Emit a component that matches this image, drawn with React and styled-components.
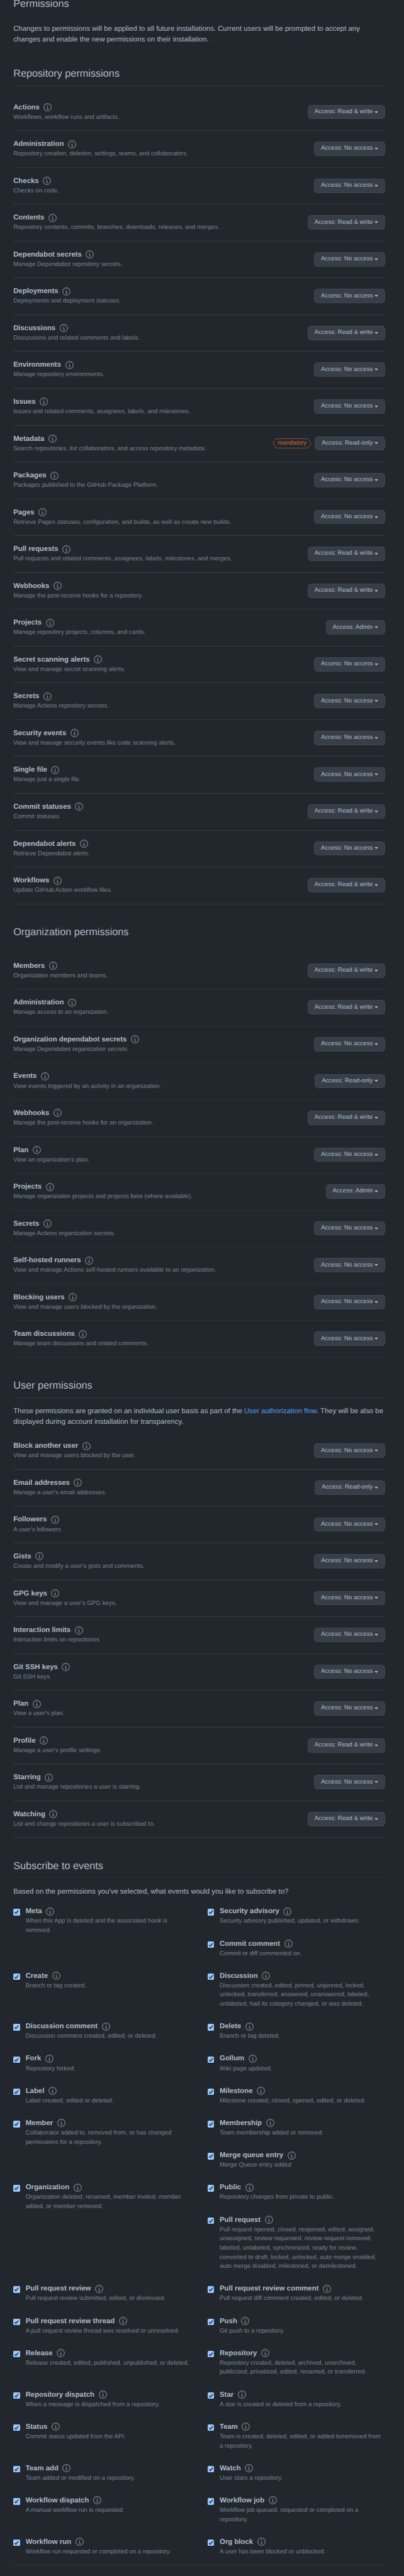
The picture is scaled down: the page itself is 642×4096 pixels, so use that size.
import React from "react";
import styled, { createGlobalStyle } from "styled-components";

// 1rem is ten design pixels.
const GlobalStyle = createGlobalStyle`
  html { font-size: 8.132px; background: #22272e; }
  body { margin: 0; }
  *, *::before, *::after { box-sizing: border-box; }
`;

const Page = styled.main`
  display: flow-root;
  height: 503.7rem;
  overflow: hidden;
  padding: 0 3.7rem 0 2.6rem;
  background: #22272e;
  color: #adbac7;
  font: 1.4rem/2.1rem "Liberation Sans", Arial, sans-serif;
  text-rendering: geometricPrecision;
`;

const Section = styled.section`
  margin-top: ${(p) => (p.$first ? "-0.8rem" : "4rem")};
`;

const Heading = styled.h2`
  height: 3.9rem;
  margin: 0 0 1.6rem;
  font-size: 2rem;
  font-weight: 400;
  line-height: 3rem;
  border-bottom: 1px solid ${(p) => (p.$faint ? "#292e36" : "#2e343c")};
`;

const Paragraph = styled.p`
  margin: 0;
  margin-bottom: ${(p) => p.$gap || "0"};
  white-space: pre;
`;

const Link = styled.a`
  color: #539bf5;
  text-decoration: none;
`;

const Row = styled.div`
  display: flex;
  justify-content: space-between;
  height: 7.2rem;
  padding-top: 1.6rem;
  border-bottom: 1px solid ${(p) => (p.$faint ? "#2d323a" : "#343a43")};
`;

const Title = styled.div`
  display: flex;
  gap: 0.8rem;
  height: 2.1rem;
  font-weight: 700;
  white-space: nowrap;
`;

const Note = styled.div`
  color: #768390;
  font-size: 1.2rem;
  line-height: 1.8rem;
  white-space: pre;
`;

const Controls = styled.div`
  display: flex;
  align-items: center;
  gap: 0.8rem;
  height: 2.8rem;
  margin-top: 0.5rem;
`;

const AccessButton = styled.button`
  display: flex;
  align-items: center;
  gap: 0.34rem;
  height: 2.8rem;
  margin: 0;
  padding: 0 1.2rem;
  border: 1px solid #3f4750;
  border-radius: 0.6rem;
  background: #373e47;
  color: #adbac7;
  font: 1.2rem/2rem "Liberation Sans", Arial, sans-serif;
  text-rendering: geometricPrecision;
  white-space: nowrap;
`;

const Caret = styled.span`
  border: 0.4rem solid transparent;
  border-top-color: currentColor;
  border-bottom-width: 0;
`;

const Tag = styled.span`
  height: 2.05rem;
  padding: 0 0.7rem;
  border: 1px solid #85502f;
  border-radius: 2em;
  color: #cc6b2c;
  font-size: 1.2rem;
  line-height: 1.8rem;
`;

const InfoSvg = styled.svg`
  width: 1.6rem;
  height: 1.6rem;
  margin-top: 0.18rem;
  fill: #768390;
`;

const EventGrid = styled.div`
  display: grid;
  grid-template-columns: 1fr 1fr;
  column-gap: 3.2rem;
  padding-bottom: 1.6rem;
  margin-bottom: 2rem;
  border-bottom: 1px solid #31373f;
`;

const EventItem = styled.div`
  display: flex;
  gap: 1.1rem;
  grid-row: span ${(p) => p.$rows};
  padding-bottom: ${(p) => (p.$last ? "0" : "2.4rem")};
`;

const Checkbox = styled.span`
  flex: none;
  display: block;
  width: 1.3rem;
  height: 1.3rem;
  margin-top: 0.5rem;
  border-radius: 0.2rem;
  background: #99c8ff;
  svg { display: block; width: 100%; height: 100%; }
`;

const Info = () => (
  <InfoSvg viewBox="0 0 16 16" aria-hidden="true">
    <path
      fillRule="evenodd"
      d="M8 1.5a6.5 6.5 0 100 13 6.5 6.5 0 000-13zM0 8a8 8 0 1116 0A8 8 0 010 8zm6.5-.25A.75.75 0 017.25 7h1a.75.75 0 01.75.75v2.75h.25a.75.75 0 010 1.5h-2a.75.75 0 010-1.5h.25v-2h-.25a.75.75 0 01-.75-.75zM8 6a1 1 0 100-2 1 1 0 000 2z"
    />
  </InfoSvg>
);

const N = "No access";
const W = "Read & write";
const R = "Read-only";
const A = "Admin";

const repository = [
  ["Actions", "Workflows, workflow runs and artifacts.", W],
  ["Administration", "Repository creation, deletion, settings, teams, and collaborators.", N],
  ["Checks", "Checks on code.", N],
  ["Contents", "Repository contents, commits, branches, downloads, releases, and merges.", W],
  ["Dependabot secrets", "Manage Dependabot repository secrets.", N],
  ["Deployments", "Deployments and deployment statuses.", N],
  ["Discussions", "Discussions and related comments and labels.", W],
  ["Environments", "Manage repository environments.", N],
  ["Issues", "Issues and related comments, assignees, labels, and milestones.", N],
  ["Metadata", "Search repositories, list collaborators, and access repository metadata.", R, "mandatory"],
  ["Packages", "Packages published to the GitHub Package Platform.", N],
  ["Pages", "Retrieve Pages statuses, configuration, and builds, as well as create new builds.", N],
  ["Pull requests", "Pull requests and related comments, assignees, labels, milestones, and merges.", W],
  ["Webhooks", "Manage the post-receive hooks for a repository.", W],
  ["Projects", "Manage repository projects, columns, and cards.", A],
  ["Secret scanning alerts", "View and manage secret scanning alerts.", N],
  ["Secrets", "Manage Actions repository secrets.", N],
  ["Security events", "View and manage security events like code scanning alerts.", N],
  ["Single file", "Manage just a single file.", N],
  ["Commit statuses", "Commit statuses.", W],
  ["Dependabot alerts", "Retrieve Dependabot alerts.", N],
  ["Workflows", "Update GitHub Action workflow files.", W],
];

const organization = [
  ["Members", "Organization members and teams.", W],
  ["Administration", "Manage access to an organization.", W],
  ["Organization dependabot secrets", "Manage Dependabot organization secrets.", N],
  ["Events", "View events triggered by an activity in an organization.", R],
  ["Webhooks", "Manage the post-receive hooks for an organization.", W],
  ["Plan", "View an organization's plan.", N],
  ["Projects", "Manage organization projects and projects beta (where available).", A],
  ["Secrets", "Manage Actions organization secrets.", N],
  ["Self-hosted runners", "View and manage Actions self-hosted runners available to an organization.", N],
  ["Blocking users", "View and manage users blocked by the organization.", N],
  ["Team discussions", "Manage team discussions and related comments.", N],
];

const user = [
  ["Block another user", "View and manage users blocked by the user.", N],
  ["Email addresses", "Manage a user's email addresses.", R],
  ["Followers", "A user's followers", N],
  ["Gists", "Create and modify a user's gists and comments.", N],
  ["GPG keys", "View and manage a user's GPG keys.", N],
  ["Interaction limits", "Interaction limits on repositories", N],
  ["Git SSH keys", "Git SSH keys", N],
  ["Plan", "View a user's plan.", N],
  ["Profile", "Manage a user's profile settings.", W],
  ["Starring", "List and manage repositories a user is starring.", N],
  ["Watching", "List and change repositories a user is subscribed to.", W],
];

// The third value is the number of grid rows the event takes.
const events = [
  ["Meta", "When this App is deleted and the associated hook is\nremoved.", 2],
  ["Security advisory", "Security advisory published, updated, or withdrawn."],
  ["Commit comment", "Commit or diff commented on."],
  ["Create", "Branch or tag created."],
  ["Discussion", "Discussion created, edited, pinned, unpinned, locked,\nunlocked, transferred, answered, unanswered, labeled,\nunlabeled, had its category changed, or was deleted."],
  ["Discussion comment", "Discussion comment created, edited, or deleted."],
  ["Delete", "Branch or tag deleted."],
  ["Fork", "Repository forked."],
  ["Gollum", "Wiki page updated."],
  ["Label", "Label created, edited or deleted."],
  ["Milestone", "Milestone created, closed, opened, edited, or deleted."],
  ["Member", "Collaborator added to, removed from, or has changed\npermissions for a repository.", 2],
  ["Membership", "Team membership added or removed."],
  ["Merge queue entry", "Merge Queue entry added"],
  ["Organization", "Organization deleted, renamed, member invited, member\nadded, or member removed.", 2],
  ["Public", "Repository changes from private to public."],
  ["Pull request", "Pull request opened, closed, reopened, edited, assigned,\nunassigned, review requested, review request removed,\nlabeled, unlabeled, synchronized, ready for review,\nconverted to draft, locked, unlocked, auto merge enabled,\nauto merge disabled, milestoned, or demilestoned."],
  ["Pull request review", "Pull request review submitted, edited, or dismissed."],
  ["Pull request review comment", "Pull request diff comment created, edited, or deleted."],
  ["Pull request review thread", "A pull request review thread was resolved or unresolved."],
  ["Push", "Git push to a repository."],
  ["Release", "Release created, edited, published, unpublished, or deleted."],
  ["Repository", "Repository created, deleted, archived, unarchived,\npublicized, privatized, edited, renamed, or transferred."],
  ["Repository dispatch", "When a message is dispatched from a repository."],
  ["Star", "A star is created or deleted from a repository."],
  ["Status", "Commit status updated from the API."],
  ["Team", "Team is created, deleted, edited, or added to/removed from\na repository."],
  ["Team add", "Team added or modified on a repository."],
  ["Watch", "User stars a repository."],
  ["Workflow dispatch", "A manual workflow run is requested."],
  ["Workflow job", "Workflow job queued, requested or completed on a\nrepository."],
  ["Workflow run", "Workflow run requested or completed on a repository."],
  ["Org block", "A user has been blocked or unblocked."],
];

const Permission = ({ name, note, access, tag, faint }) => (
  <Row $faint={faint}>
    <div>
      <Title>{name}<Info /></Title>
      <Note>{note}</Note>
    </div>
    <Controls>
      {tag && <Tag>{tag}</Tag>}
      <AccessButton type="button">
        <span>Access: {access}</span>
        <Caret />
      </AccessButton>
    </Controls>
  </Row>
);

const PermissionList = ({ items, faint }) =>
  items.map(([name, note, access, tag]) => (
    <Permission key={name} name={name} note={note} access={access} tag={tag} faint={faint} />
  ));

const EventOption = ({ name, note, rows = 1, last }) => (
  <EventItem $rows={rows} $last={last}>
    <Checkbox role="checkbox" aria-checked="true" aria-label={name}>
      <svg viewBox="0 0 13 13">
        <path d="M2.8 6.7l2.5 2.6L10 3.4" fill="none" stroke="#30363e" strokeWidth="1.9" />
      </svg>
    </Checkbox>
    <div>
      <Title>{name}<Info /></Title>
      <Note>{note}</Note>
    </div>
  </EventItem>
);

export default function App() {
  return (
    <>
      <GlobalStyle />
      <Page>
        <Section $first>
          <Heading $faint>Permissions</Heading>
          <Paragraph>
            {"Changes to permissions will be applied to all future installations. Current users will be prompted to accept any\nchanges and enable the new permissions on their installation."}
          </Paragraph>
        </Section>
        <Section>
          <Heading>Repository permissions</Heading>
          <PermissionList items={repository} />
        </Section>
        <Section>
          <Heading $faint>Organization permissions</Heading>
          <PermissionList items={organization} faint />
        </Section>
        <Section>
          <Heading>User permissions</Heading>
          <Paragraph $gap="1rem">
            These permissions are granted on an individual user basis as part of the <Link>User authorization flow</Link>
            {". They will be also be\ndisplayed during account installation for transparency."}
          </Paragraph>
          <PermissionList items={user} />
        </Section>
        <Section>
          <Heading $faint>Subscribe to events</Heading>
          <Paragraph $gap="1.8rem">
            Based on the permissions you've selected, what events would you like to subscribe to?
          </Paragraph>
          <EventGrid>
            {events.map(([name, note, rows], i) => (
              <EventOption key={name} name={name} note={note} rows={rows} last={i >= events.length - 2} />
            ))}
          </EventGrid>
        </Section>
      </Page>
    </>
  );
}
